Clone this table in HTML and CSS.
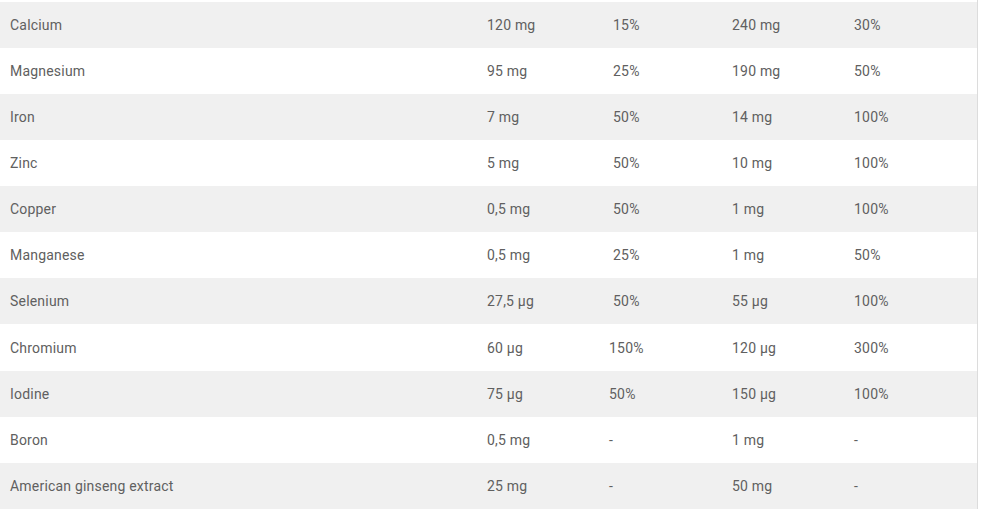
FILE: index.html
```html
<!DOCTYPE html>
<html>
<head>
<meta charset="utf-8">
<link rel="stylesheet" href="styles.css">
</head>
<body>
<div class="table">
  <div class="row"><span>Calcium</span><span>120 mg</span><span>15%</span><span>240 mg</span><span>30%</span></div>
  <div class="row"><span>Magnesium</span><span>95 mg</span><span>25%</span><span>190 mg</span><span>50%</span></div>
  <div class="row"><span>Iron</span><span>7 mg</span><span>50%</span><span>14 mg</span><span>100%</span></div>
  <div class="row"><span>Zinc</span><span>5 mg</span><span>50%</span><span>10 mg</span><span>100%</span></div>
  <div class="row"><span>Copper</span><span>0,5 mg</span><span>50%</span><span>1 mg</span><span>100%</span></div>
  <div class="row"><span>Manganese</span><span>0,5 mg</span><span>25%</span><span>1 mg</span><span>50%</span></div>
  <div class="row"><span>Selenium</span><span>27,5 µg</span><span>50%</span><span>55 µg</span><span>100%</span></div>
  <div class="row"><span>Chromium</span><span>60 µg</span><span class="shift">150%</span><span>120 µg</span><span>300%</span></div>
  <div class="row"><span>Iodine</span><span>75 µg</span><span class="shift">50%</span><span>150 µg</span><span>100%</span></div>
  <div class="row"><span>Boron</span><span>0,5 mg</span><span class="shift">-</span><span>1 mg</span><span>-</span></div>
  <div class="row"><span>American ginseng extract</span><span>25 mg</span><span class="shift">-</span><span>50 mg</span><span>-</span></div>
</div>
</body>
</html>
```
FILE: styles.css
```css
html, body {
  margin: 0;
  padding: 0;
  background: #ffffff;
}
body {
  font-family: Roboto, "Liberation Sans", sans-serif;
  font-size: 14px;
  letter-spacing: 0.2px;
  color: #606060;
}
.table {
  width: 977px;
  border-right: 1px solid #dcdcdc;
  padding-top: 1.5px;
  display: flex;
  flex-direction: column;
}
.row {
  display: grid;
  grid-template-columns: 477px 126px 119px 122px 1fr;
  height: 46.15px;
  align-items: center;
}
.row:nth-child(odd) {
  background: #f0f0f0;
}
.row span {
  padding-left: 10px;
  white-space: nowrap;
}
.row span.shift {
  padding-left: 6px;
}
```
